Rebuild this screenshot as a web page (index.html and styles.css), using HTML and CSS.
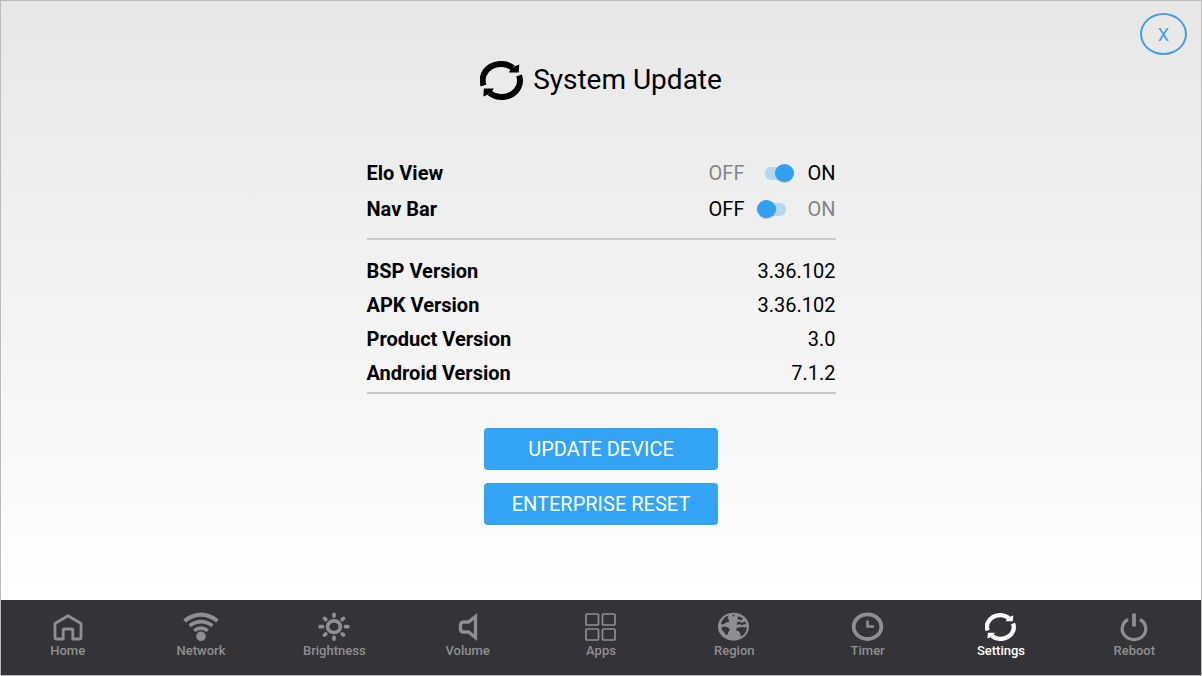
FILE: index.html
```html
<!DOCTYPE html>
<html lang="en">
<head>
    <meta charset="UTF-8">
    <meta name="viewport" content="width=device-width, initial-scale=1.0">
    <title>System Update</title>
    <link rel="stylesheet" href="styles.css">
</head>
<body>
    <svg class="sprite" aria-hidden="true">
        <symbol id="sync" viewBox="0 0 43 39">
            <g fill="none" stroke="currentColor" stroke-width="6">
                <path d="M3.600 24.500A18.300 16.300 0 0 1 33 7"/>
                <path d="M39 14.500A18.300 16.300 0 0 1 9.600 32"/>
            </g>
            <path fill="currentColor" d="M28.800 11.500H38.700L39.300 3.600L35.500 5L31 8ZM13.800 27.500H3.900L3.300 35.400L7 34L11.500 31Z"/>
        </symbol>
    </svg>

    <main class="update-page">
        <button class="close-button" type="button" aria-label="Close">X</button>

        <h1 class="page-title">
            <svg class="title-icon" aria-hidden="true"><use href="#sync"/></svg>
            System Update
        </h1>

        <div class="settings">
            <div class="toggle-row">
                <label class="toggle-name" for="eloView">Elo View</label>
                <span class="off-text">OFF</span>
                <input type="checkbox" class="switch" id="eloView" checked>
                <span class="on-text">ON</span>
            </div>
            <div class="toggle-row">
                <label class="toggle-name" for="navBar">Nav Bar</label>
                <span class="off-text">OFF</span>
                <input type="checkbox" class="switch" id="navBar">
                <span class="on-text">ON</span>
            </div>
        </div>

        <div class="versions">
            <table class="version-table">
                <tr><th scope="row">BSP Version</th><td>3.36.102</td></tr>
                <tr><th scope="row">APK Version</th><td>3.36.102</td></tr>
                <tr><th scope="row">Product Version</th><td>3.0</td></tr>
                <tr><th scope="row">Android Version</th><td>7.1.2</td></tr>
            </table>
        </div>

        <div class="actions">
            <button class="action-button" type="button">UPDATE DEVICE</button>
            <button class="action-button" type="button">ENTERPRISE RESET</button>
        </div>
    </main>

    <nav class="bottom-nav">
        <a class="nav-item" href="#home">
            <svg class="nav-icon" viewBox="0 0 36 30"><path d="M5 11.500L18 3.700L31 11.500V25.500Q31 27 29.500 27H22.800V18Q22.800 17 21.800 17H14.200Q13.200 17 13.200 18V27H6.500Q5 27 5 25.500Z" stroke-width="2.800" stroke-linejoin="round"/></svg>
            Home
        </a>
        <a class="nav-item" href="#network">
            <svg class="nav-icon" viewBox="0 0 36 30"><path d="M1.500 8.800Q18 -3.500 34.500 8.800" stroke-width="4"/><path d="M6.500 13.800Q18 5.500 29.500 13.800M11.200 18.600Q18 13.500 24.800 18.600" stroke-width="3.600"/><circle class="solid" cx="18" cy="24.300" r="4.800"/></svg>
            Network
        </a>
        <a class="nav-item" href="#brightness">
            <svg class="nav-icon" viewBox="0 0 36 30"><ellipse cx="18" cy="14.700" rx="6.400" ry="5.800" stroke-width="3.600"/><path d="M18 2.500V4M18 25.400V27M4.200 14.700H6.500M29.500 14.700H31.800M8.500 6.400L9.800 7.500M26.200 21.900L27.500 23M8.500 23L9.800 21.900M26.200 7.500L27.500 6.400" stroke-width="3.800" stroke-linecap="round"/></svg>
            Brightness
        </a>
        <a class="nav-item" href="#volume">
            <svg class="nav-icon" viewBox="0 0 36 30"><path d="M25.500 4.500L18.500 10H14Q10.500 10 10.500 13V17Q10.500 20 14 20H18.500L25.500 25.500Z" stroke-width="3.400"/></svg>
            Volume
        </a>
        <a class="nav-item" href="#apps">
            <svg class="nav-icon" viewBox="0 0 36 30"><path d="M4 2H14.500Q15.500 2 15.500 3V12Q15.500 13 14.500 13H4Q3 13 3 12V3Q3 2 4 2ZM20.500 2H31Q32 2 32 3V12Q32 13 31 13H20.500Q19.500 13 19.500 12V3Q19.500 2 20.500 2ZM4 17H14.500Q15.500 17 15.500 18V27Q15.500 28 14.500 28H4Q3 28 3 27V18Q3 17 4 17ZM20.500 17H31Q32 17 32 18V27Q32 28 31 28H20.500Q19.500 28 19.500 27V18Q19.500 17 20.500 17Z" stroke-width="1.700"/></svg>
            Apps
        </a>
        <a class="nav-item" href="#region">
            <svg class="nav-icon" viewBox="0 0 36 30"><ellipse class="solid" cx="17.500" cy="14.700" rx="15.500" ry="14"/><path class="cutout" d="M12.500 3.500L9.500 5L7 7.500L5 11L5.500 12.500L8 12L10 10.500L12.500 10L13.500 8L11.500 7ZM5.500 15.500L8 14.500L12 15.500L14 17.500L12 20.500L11.500 23L9.500 22.500L8 20L6 18ZM16 3L18.500 2.500L18 5ZM21.500 4.500L24.500 5L27 7L25 8.500L23.500 7L22 8ZM21 10.500L24 9.500L25.500 11L29 9.500L30.500 12.500L28 12L26 13.500L24 12L21 13ZM20.500 16L25 15L31 15.500L30 19.500L27.500 23L25 24.500L24 21L22.500 19L20.500 19Z"/></svg>
            Region
        </a>
        <a class="nav-item" href="#timer">
            <svg class="nav-icon" viewBox="0 0 36 30"><ellipse cx="17.500" cy="14.700" rx="13.800" ry="12.300" stroke-width="3.800"/><path d="M17.500 8.500V14.500H24" stroke-width="2.600"/></svg>
            Timer
        </a>
        <a class="nav-item active" href="#settings" aria-current="page">
            <svg class="nav-icon" viewBox="0 0 36 30"><use href="#sync" x="2" y="1" width="31" height="28"/></svg>
            Settings
        </a>
        <a class="nav-item" href="#reboot">
            <svg class="nav-icon" viewBox="0 0 36 30"><path d="M12 7.500A11.800 10.800 0 1 0 24 7.500" stroke-width="3.200"/><path d="M18 1.500V14.500" stroke-width="3.800"/></svg>
            Reboot
        </a>
    </nav>
</body>
</html>
```
FILE: styles.css
```css
* {
    box-sizing: border-box;
}
body {
    font-family: Roboto, sans-serif;
    font-size: 20px;
    color: #000000;
    margin: 0;
    min-height: 100vh;
    display: flex;
    flex-direction: column;
    border: 1px solid #bbbbbb;
}
.sprite {
    display: none;
}
.update-page {
    position: relative;
    flex: 1;
    display: flex;
    flex-direction: column;
    align-items: center;
    padding: 55px 20px 20px;
    background: linear-gradient(#e7e7e7, #eeeeee 30%, #f8f8f8 75%, #ffffff);
}
.close-button {
    position: absolute;
    top: 12px;
    right: 14px;
    width: 47px;
    height: 42px;
    padding: 0;
    font-family: inherit;
    font-size: 18px;
    color: #459fdb;
    background: none;
    border: 2px solid #459fdb;
    border-radius: 50%;
    cursor: pointer;
}
.page-title {
    display: flex;
    align-items: center;
    gap: 10px;
    margin: 0 0 51px;
    font-size: 28px;
    font-weight: 400;
    line-height: 48px;
}
.title-icon {
    width: 43px;
    height: 39px;
}
.settings,
.versions {
    width: 100%;
    max-width: 469px;
    border-bottom: 2px solid #c8c8c8;
}
.settings {
    padding-bottom: 11px;
}
.toggle-row {
    display: flex;
    align-items: center;
    height: 36px;
}
.toggle-name {
    flex: 1;
    font-weight: 700;
}
.off-text,
.on-text {
    color: #858585;
}
.off-text:has(+ .switch:not(:checked)),
.switch:checked + .on-text {
    color: #000000;
}
.switch {
    appearance: none;
    position: relative;
    width: 37px;
    height: 19px;
    margin: 0 13px;
    cursor: pointer;
}
.switch::before {
    content: "";
    position: absolute;
    top: 3px;
    left: 8px;
    right: 8px;
    height: 13px;
    border-radius: 6px;
    background-color: #b4d7f2;
}
.switch::after {
    content: "";
    position: absolute;
    top: 0;
    left: 0;
    width: 19px;
    height: 18px;
    border-radius: 50%;
    background-color: #32a0f0;
    box-shadow: 0 1px 1px rgba(0, 0, 0, 0.2);
}
.switch:checked::after {
    left: 18px;
}
.versions {
    padding: 14px 0 2px;
}
.version-table {
    width: 100%;
    border-collapse: collapse;
}
.version-table th,
.version-table td {
    height: 34px;
    padding: 0;
    text-align: left;
}
.version-table td {
    text-align: right;
}
.actions {
    display: flex;
    flex-direction: column;
    gap: 13px;
    width: 234px;
    margin-top: 34px;
}
.action-button {
    height: 42px;
    padding: 0;
    font-family: inherit;
    font-size: 20px;
    color: #ffffff;
    background-color: #33a3f4;
    border: none;
    border-radius: 4px;
    cursor: pointer;
}
.bottom-nav {
    display: grid;
    grid-template-columns: repeat(9, 1fr);
    height: 75px;
    background-color: #333338;
}
.nav-item {
    display: flex;
    flex-direction: column;
    align-items: center;
    gap: 1px;
    padding-top: 12px;
    font-size: 13px;
    font-weight: 500;
    line-height: 16px;
    color: #8f8f92;
    text-decoration: none;
}
.nav-item.active {
    color: #ffffff;
}
.nav-icon {
    width: 36px;
    height: 30px;
    fill: none;
    stroke: currentColor;
}
.nav-icon .solid {
    fill: currentColor;
    stroke: none;
}
.nav-icon .cutout {
    fill: #333338;
    stroke: none;
}
.nav-icon use {
    stroke: none;
}
```
